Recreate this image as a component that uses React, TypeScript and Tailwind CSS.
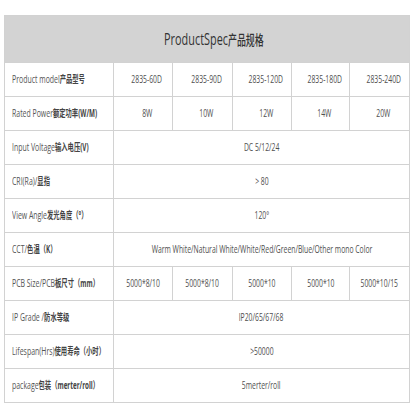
import React from "react";

const font = {
  fontFamily: '"Open Sans", "Noto Sans CJK SC", sans-serif',
};

type Row = {
  en: string;
  zh: string;
  values: string[];
};

const rows: Row[] = [
  {
    en: "Product model",
    zh: "产品型号",
    values: ["2835-60D", "2835-90D", "2835-120D", "2835-180D", "2835-240D"],
  },
  {
    en: "Rated Power",
    zh: "额定功率(W/M)",
    values: ["8W", "10W", "12W", "14W", "20W"],
  },
  { en: "Input Voltage", zh: "输入电压(V)", values: ["DC 5/12/24"] },
  { en: "CRI(Ra)/", zh: "显指", values: ["> 80"] },
  { en: "View Angle", zh: "发光角度（°）", values: ["120°"] },
  {
    en: "CCT/",
    zh: "色温（K）",
    values: ["Warm White/Natural White/White/Red/Green/Blue/Other mono Color"],
  },
  {
    en: "PCB Size/PCB",
    zh: "板尺寸（mm）",
    values: ["5000*8/10", "5000*8/10", "5000*10", "5000*10", "5000*10/15"],
  },
  { en: "IP Grade /", zh: "防水等级", values: ["IP20/65/67/68"] },
  { en: "Lifespan(Hrs)", zh: "使用寿命（小时）", values: [">50000"] },
  { en: "package", zh: "包装（merter/roll）", values: ["5merter/roll"] },
];

function Cell({ text, shift }: { text: string; shift?: boolean }) {
  return (
    <div
      className={
        shift
          ? "flex h-[33px] items-center justify-center pl-[8px]"
          : "flex h-[33px] items-center justify-center"
      }
    >
      <span className="inline-block shrink-0 origin-center scale-x-[0.62] whitespace-nowrap text-[11px] text-[#505050]">
        {text}
      </span>
    </div>
  );
}

export default function App() {
  return (
    <div className="h-[416px] w-[416px] bg-white pt-[15px] pl-[4px]" style={font}>
      <table className="w-[405px] table-fixed border-collapse">
        <colgroup>
          <col className="w-[109px]" />
          <col className="w-[59px]" />
          <col className="w-[60px]" />
          <col className="w-[59px]" />
          <col className="w-[58px]" />
          <col className="w-[60px]" />
        </colgroup>
        <thead>
          <tr>
            <th
              colSpan={6}
              className="h-[47px] border border-[#d2d2d2] bg-[#d3d3d3] p-0 font-normal"
            >
              <div className="flex justify-center pl-[14px]">
                <span className="inline-block origin-center scale-x-[0.64] whitespace-nowrap text-[17px] text-[#333]">
                  ProductSpec
                  <span className="text-[14px] font-medium">产品规格</span>
                </span>
              </div>
            </th>
          </tr>
        </thead>
        <tbody>
          {rows.map((row) => (
            <tr key={row.en}>
              <td className="border border-[#d2d2d2] p-0">
                <div className="flex h-[33px] items-center pl-[7px]">
                  <span className="inline-block shrink-0 origin-left scale-x-[0.63] whitespace-nowrap text-[11px] text-[#555]">
                    {row.en}
                    <span className="text-[10px] font-bold text-[#444]">{row.zh}</span>
                  </span>
                </div>
              </td>
              {row.values.length === 1 ? (
                <td colSpan={5} className="overflow-hidden border border-[#d2d2d2] p-0">
                  <Cell text={row.values[0]} />
                </td>
              ) : (
                row.values.map((v, i) => (
                  <td key={i} className="overflow-visible border border-[#d2d2d2] p-0">
                    <Cell text={v} shift={row.en === "Product model" || row.en === "Rated Power"} />
                  </td>
                ))
              )}
            </tr>
          ))}
        </tbody>
      </table>
    </div>
  );
}
